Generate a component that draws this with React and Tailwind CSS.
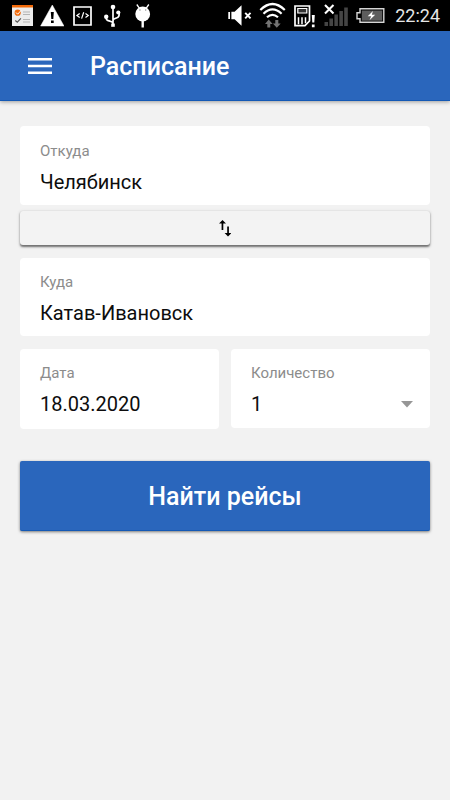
function TaskIcon() {
  return (
    <svg className="h-[31px] w-[21px]" viewBox="12 0 21 31" fill="none">
      <path d="M12 5h21v21H12z" fill="#ececec" />
      <path d="M12 5h21v2.500H12z" fill="#f26a0a" />
      <circle cx="17.7" cy="12.7" r="3.1" fill="#f26a0a" />
      <path d="M16 12.5l1.7 1.7 3.6-4" stroke="#fff" strokeWidth="1" />
      <path d="M23 12h7M23 14.5h7M23 19.5h7M23 22h7" stroke="#b5b5b5" strokeWidth="1" />
      <path d="M15.3 20.5l2 1.7 3.6-3.8" stroke="#555" strokeWidth="1.2" />
    </svg>
  );
}

function WarningIcon() {
  return (
    <svg className="h-[31px] w-[24px]" viewBox="40 0 24 31">
      <path d="M52.3 5L64 26H40.6z" fill="#fff" stroke="#fff" strokeWidth=".5" strokeLinejoin="round" />
      <path d="M50.8 12h3l-.5 7h-2zM51 20.5h2.7V23H51z" fill="#000" />
    </svg>
  );
}

function CodeIcon() {
  return (
    <svg className="h-[31px] w-[20px]" viewBox="73 0 20 31" fill="none" stroke="#fff">
      <path d="M74 7h17v18H74z" strokeWidth="1.7" />
      <path d="M79.7 13.5l-2.8 2 2.8 2M85.5 13.5l2.8 2-2.8 2M83.7 12.3l-2.1 6.3" strokeWidth="1.2" />
    </svg>
  );
}

function UsbIcon() {
  return (
    <svg className="h-[31px] w-[18px]" viewBox="104 0 18 31" fill="none">
      <path d="M113 8v17M106.2 17v1.200q0 1.600 1.400 2.200l4 1.400q1.400.6 1.400 2M119 13q.8 4-2.600 5l-2 .8q-1.400.7-1.400 2.200" stroke="#fff" strokeWidth="1.700" />
      <circle cx="113" cy="7" r="2.300" fill="#fff" />
      <circle cx="118.300" cy="12.500" r="2.100" fill="#fff" />
      <circle cx="106.200" cy="16.700" r="2.200" fill="#fff" />
      <path d="M111.200 23.500h3.600v3.300h-3.600z" fill="#fff" />
    </svg>
  );
}

function DebugIcon() {
  return (
    <svg className="h-[31px] w-[16px]" viewBox="135 0 16 31" fill="none">
      <path d="M136.800 4.500l2.700 3.800M148.800 4.500l-2.700 3.800" stroke="#fff" strokeWidth="1.300" />
      <ellipse cx="142.700" cy="14" rx="7.400" ry="7.600" fill="#fff" />
      <path d="M142.700 20v7.500" stroke="#fff" strokeWidth="2.400" />
      <path d="M139.300 10h1.300M145 10h1.300" stroke="#777" strokeWidth="1.100" />
    </svg>
  );
}

function MuteIcon() {
  return (
    <svg className="h-[31px] w-[25px]" viewBox="228 0 25 31" fill="none">
      <path d="M228.300 12h1.800v7h-1.800zM231.500 11.500h3.300l7.200-6.700v21.400l-7.200-6.700h-3.300z" fill="#fff" />
      <path d="M245.800 12.700l5.500 5.800M251.300 12.700l-5.500 5.800" stroke="#fff" strokeWidth="2" />
    </svg>
  );
}

function WifiIcon() {
  return (
    <svg className="h-[31px] w-[27px]" viewBox="260 0 27 31" fill="none">
      <path d="M261.300 10Q273.500-2 285.800 10M264.500 13.700q9-8.600 18.100 0M268 17.300q5.500-5 11 0" stroke="#fff" strokeWidth="2.200" />
      <path d="M269.700 19.500l3.900 4.500h-2.300v3.500h-3V24H266zM276.300 20h3v3.500h2.400l-3.900 4.300-3.900-4.300h2.400z" fill="#737373" />
    </svg>
  );
}

function SimIcon() {
  return (
    <svg className="h-[31px] w-[22px]" viewBox="295 0 22 31" fill="none">
      <path d="M296 6h14.500v15l-4.500 4.700H296z" stroke="#fff" strokeWidth="1.700" />
      <path d="M298.800 8.500h9v4.500h-9z" fill="#333" stroke="#fff" strokeWidth="1.200" />
      <path d="M299.500 17.300v7M303 17.300v7M306.500 17.300v6" stroke="#fff" strokeWidth="1.500" />
      <path d="M312.800 15h3l-.5 7.500h-2zM312.900 24.500h2.700v2.700h-2.700z" fill="#fff" />
    </svg>
  );
}

function SignalIcon() {
  return (
    <svg className="h-[31px] w-[25px]" viewBox="325 0 25 31" fill="none">
      <path d="M325.500 22h3.500v4h-3.500zM330.400 18.500h3.600V26h-3.600zM335.400 14.500h3.500V26h-3.500zM340.300 11h3.600v15h-3.600zM345.200 7.500h3.600V26h-3.600z" fill="#454545" />
      <path d="M326 5l8.500 8.500M334.500 5L326 13.500" stroke="#fff" strokeWidth="2.100" />
    </svg>
  );
}

function BatteryIcon() {
  return (
    <svg className="h-[31px] w-[29px]" viewBox="357 0 29 31" fill="none">
      <path d="M361 8.800h23.800v13.500H361v-3.500h-3v-6h3z" stroke="#d5d5d5" strokeWidth="1.400" />
      <path d="M362.800 10.500h20.400v10.200h-20.400z" fill="#5d5d5d" />
      <path d="M374 11l-5.300 5.300h3.500l-1.700 3.900 5.700-5.400h-3.400z" fill="#fff" />
    </svg>
  );
}

function StatusBar() {
  return (
    <div className="flex h-[31px] items-center justify-between bg-black pr-[10px] pl-3">
      <div className="flex items-center">
        <TaskIcon />
        <div className="ml-[7px] flex"><WarningIcon /></div>
        <div className="ml-[9px] flex"><CodeIcon /></div>
        <div className="ml-[11px] flex"><UsbIcon /></div>
        <div className="ml-[13px] flex"><DebugIcon /></div>
      </div>
      <div className="flex w-[212px] items-center">
        <MuteIcon />
        <div className="ml-[7px] flex"><WifiIcon /></div>
        <div className="ml-2 flex"><SimIcon /></div>
        <div className="ml-2 flex"><SignalIcon /></div>
        <div className="ml-[7px] flex"><BatteryIcon /></div>
        <span className="ml-[10px] text-[18px] leading-[22px] whitespace-nowrap text-[#e6e6e6]">22:24</span>
      </div>
    </div>
  );
}

function Field({ label, value, className = "", children }) {
  return (
    <div className={`flex flex-col rounded-[4px] bg-white px-5 ${className}`}>
      <span className="text-[15px] leading-[20px] text-[#8c8c8c]">{label}</span>
      <div className="mt-[9px] flex items-center justify-between">
        <span className="text-[20px] leading-[24px] text-[#0d0d0d]">{value}</span>
        {children}
      </div>
    </div>
  );
}

export default function App() {
  return (
    <div className="flex h-[800px] w-[450px] flex-col bg-[#f2f2f2] font-['Roboto',sans-serif]">
      <StatusBar />
      <header className="flex h-[70px] shrink-0 items-center border-b border-[#1459b5] bg-[#2a66bc] pt-[2px] pl-7 text-white shadow-[0_1px_4px_rgba(0,0,0,0.35)]">
        <svg className="h-[17px] w-6" viewBox="0 0 24 17" fill="#fff">
          <path d="M0 0h24v2.500H0zM0 6.700h24v2.500H0zM0 13.400h24v2.500H0z" />
        </svg>
        <h1 className="ml-[38px] text-[25px] leading-[30px] font-medium">Расписание</h1>
      </header>
      <main className="flex flex-col px-5 pt-[25px]">
        <Field label="Откуда" value="Челябинск" className="h-[79px] pt-[15px]" />
        <button className="mt-[6px] flex h-[34px] items-center justify-center rounded-[3px] bg-[#f3f3f3] shadow-[0_1.5px_2px_rgba(0,0,0,0.5),0_1px_4px_rgba(0,0,0,0.1)]">
          <svg className="h-[17px] w-3" viewBox="0 0 12 17" fill="#000">
            <path d="M3.500 0L7 3.500H4.300V10H2.600V3.500H0zM8.200 6.500h1.700v6.500h2.600L9 16.500 5.600 13h2.600z" />
          </svg>
        </button>
        <Field label="Куда" value="Катав-Ивановск" className="mt-[13px] h-[78px] pt-[14px]" />
        <div className="mt-[13px] flex items-start gap-3">
          <Field label="Дата" value="18.03.2020" className="h-[80px] w-[199px] pt-[14px]" />
          <Field label="Количество" value="1" className="h-[79px] w-[199px] pt-[14px]">
            <svg className="-mr-[3px] h-[7px] w-[12px]" viewBox="0 0 12 7" fill="#969696">
              <path d="M0 0h12L6 6.500z" />
            </svg>
          </Field>
        </div>
        <button className="mt-8 flex h-[70px] items-center justify-center rounded-[2px] border-b border-[#1459b5] bg-[#2a66bc] pt-[2px] text-[25px] leading-[30px] font-medium text-white shadow-[0_1px_3px_rgba(0,0,0,0.5)]">
          Найти рейсы
        </button>
      </main>
    </div>
  );
}
